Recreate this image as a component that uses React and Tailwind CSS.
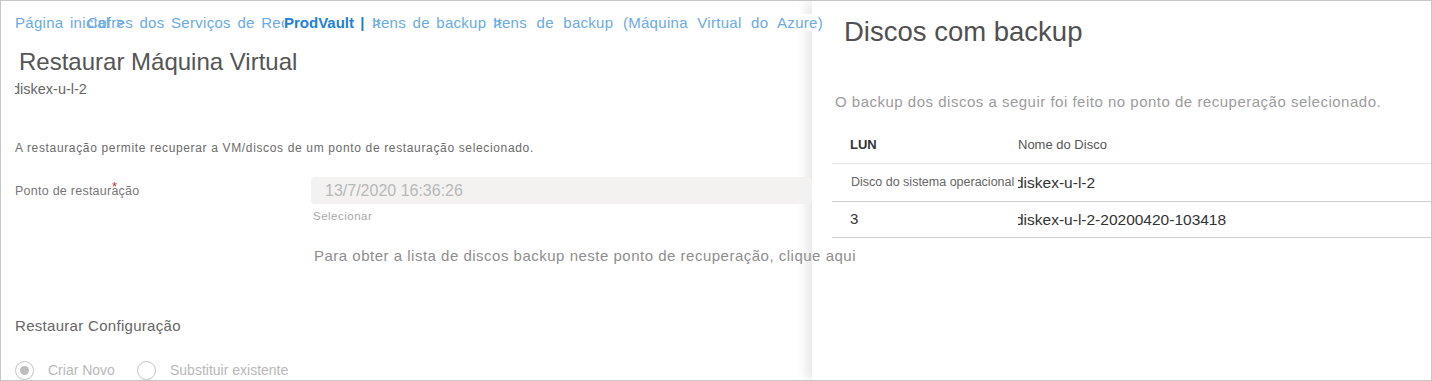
import React from "react";

function Breadcrumb() {
  return (
    <div className="flex whitespace-nowrap text-[15px] leading-[20px] tracking-[0.3px] text-[#6aaae6] [word-spacing:2px]">
      <span className="w-[72px] shrink-0">Página inicial &gt;</span>
      <span className="w-[197px] shrink-0 overflow-hidden">Cofres dos Serviços de Recuperação &gt;</span>
      <span className="w-[88px] shrink-0 bg-white font-semibold tracking-normal text-[#1f80d6]">ProdVault |</span>
      <span className="w-[121px] shrink-0">
        <span className="inline-block w-0">&gt;</span>Itens de backup
      </span>
      <span className="shrink-0 [word-spacing:5px]">
        <span className="inline-block w-0">&gt;</span>Itens de backup (Máquina Virtual do{" "}
        <span className="bg-white">Azure)</span>
      </span>
    </div>
  );
}

function Radio({ checked, label, className }) {
  return (
    <div className={`flex items-center ${className || ""}`}>
      <span className="flex h-[19px] w-[19px] shrink-0 items-center justify-center rounded-full border-[1.5px] border-[#c4c4c4]">
        {checked && <span className="h-[9px] w-[9px] rounded-full bg-[#bdbdbd]" />}
      </span>
      <span className="ml-[14px] text-[14px] text-[#b8b8b8]">{label}</span>
    </div>
  );
}

export default function App() {
  return (
    <div
      className="flex h-[381px] w-[1432px] overflow-hidden border border-[#c6c6c6] bg-white"
      style={{ fontFamily: '"Liberation Sans", Arial, sans-serif' }}
    >
      {/* Restore blade */}
      <div className="relative z-10 w-[811px] shrink-0 pl-[14px] pt-[12px]">
        <Breadcrumb />

        <h1 className="ml-[4px] mt-[15px] text-[24px] leading-[28px] text-[#555]">Restaurar Máquina Virtual</h1>
        <div className="mt-[5px] overflow-hidden text-[14.5px] leading-[16px] text-[#666]">
          <span className="-ml-[3px]">diskex-u-l-2</span>
        </div>

        <p className="mt-[43px] whitespace-nowrap text-[12px] leading-[16px] tracking-[0.65px] text-[#6b6b6b]">
          A restauração permite recuperar a VM/discos de um ponto de restauração selecionado.
        </p>

        <div className="mt-[21px] flex">
          <div className="w-[296px] shrink-0 pt-[6px] text-[12.5px] leading-[16px] tracking-[0.25px] text-[#777]">
            <span className="relative">
              Ponto de restauração
              <span className="absolute left-[97px] top-[-5px] text-[13px] text-[#b4333b]">*</span>
            </span>
          </div>
          <div className="min-w-0 flex-1">
            <div className="flex h-[27px] items-center rounded-sm bg-[#f3f2f1] pl-[14px] text-[16px] text-[#b8b8b8]">
              13/7/2020 16:36:26
            </div>
            <div className="ml-[2px] mt-[5px] text-[11.5px] leading-[14px] tracking-[0.5px] text-[#a8a8a8]">Selecionar</div>
            <div className="ml-[3px] mt-[23px] whitespace-nowrap text-[15px] leading-[20px] tracking-[0.5px] text-[#8e8e8e]">
              Para obter a lista de discos backup neste ponto de recuperação, clique aqui
            </div>
          </div>
        </div>

        <h2 className="mt-[50px] text-[15px] leading-[20px] tracking-[0.3px] text-[#666]">Restaurar Configuração</h2>
        <div className="mt-[24px] flex items-center">
          <Radio checked label="Criar Novo" className="w-[122px]" />
          <Radio label="Substituir existente" />
        </div>
      </div>

      {/* Disks panel */}
      <div className="flex-1 bg-white pl-[20px] pt-[15px] shadow-[-6px_0_10px_rgba(0,0,0,0.09)]">
        <h2 className="ml-[12px] text-[27.5px] leading-[32px] text-[#505050]">Discos com backup</h2>
        <p className="ml-[3px] mt-[46px] whitespace-nowrap text-[15px] leading-[16px] tracking-[0.5px] text-[#9c9c9c]">
          O backup dos discos a seguir foi feito no ponto de recuperação selecionado.
        </p>

        <div className="mt-[17px]">
          <div className="flex h-[37px] items-center border-b border-[#e6e6e6] pb-[1px]">
            <span className="w-[186px] pl-[18px] text-[13px] font-semibold text-[#333]">LUN</span>
            <span className="text-[13px] text-[#555]">Nome do Disco</span>
          </div>
          <div className="flex h-[38px] items-center border-b border-[#cfcfcf]">
            <span className="w-[186px] whitespace-nowrap pl-[19px] text-[12.5px] text-[#666]">Disco do sistema operacional</span>
            <span className="overflow-hidden text-[15.5px] text-[#333]">
              <span className="-ml-[3px] inline-block">diskex-u-l-2</span>
            </span>
          </div>
          <div className="flex h-[36px] items-center border-b border-[#cfcfcf]">
            <span className="w-[186px] pl-[18px] text-[15px] text-[#333]">3</span>
            <span className="overflow-hidden text-[15.5px] text-[#333]">
              <span className="-ml-[3px] inline-block">diskex-u-l-2-20200420-103418</span>
            </span>
          </div>
        </div>
      </div>
    </div>
  );
}
